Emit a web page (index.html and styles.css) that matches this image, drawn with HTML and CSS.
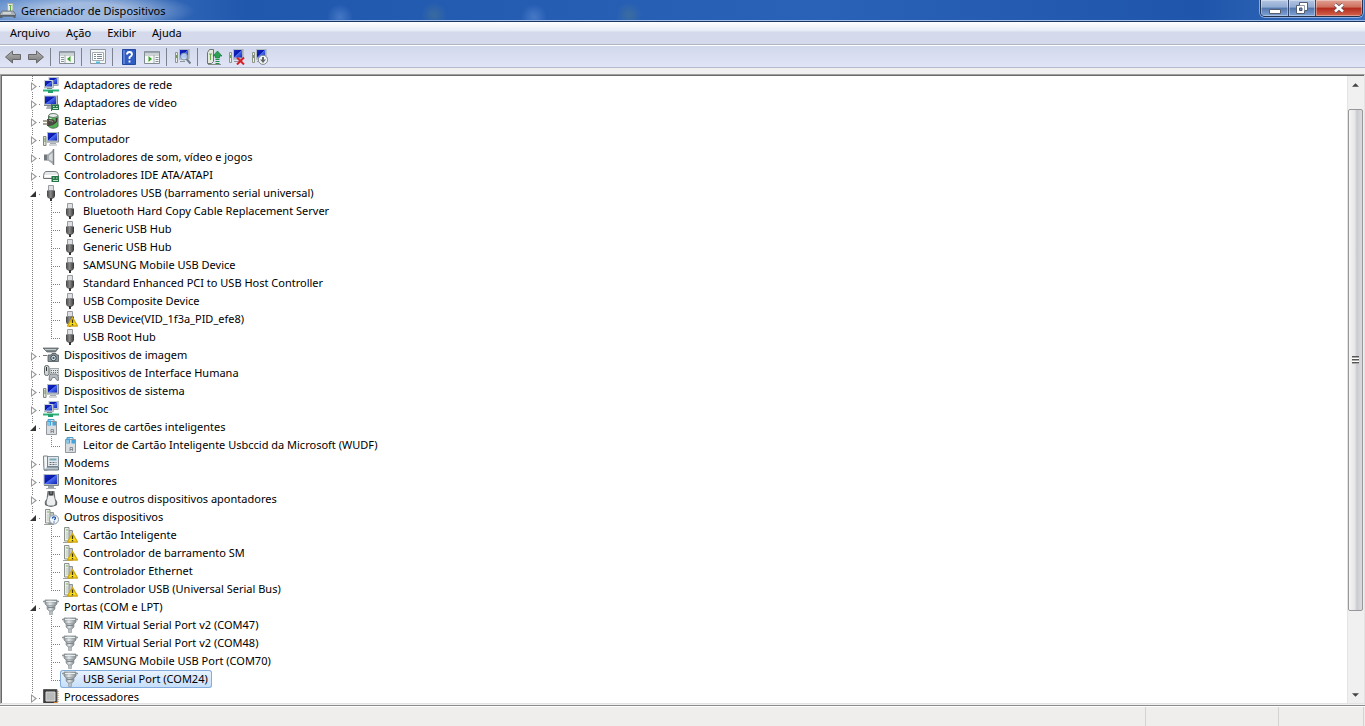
FILE: index.html
```html
<!DOCTYPE html>
<html lang="pt-BR">

<head>
  <meta charset="UTF-8" />
  <meta name="viewport" content="width=device-width, initial-scale=1.0" />
  <title>Gerenciador de Dispositivos</title>
  <link rel="stylesheet" href="styles.css">
</head>

<body>
  <!-- icon sprites -->
  <svg class="sprites" aria-hidden="true">
    <defs>
      <linearGradient id="screen" x1="0" y1="0" x2="1" y2="1">
        <stop offset="0" stop-color="#1a2fd0" /><stop offset=".45" stop-color="#0a18a8" />
        <stop offset=".5" stop-color="#4a6cf0" /><stop offset="1" stop-color="#0c1cb0" />
      </linearGradient>
      <linearGradient id="metal" x1="0" y1="0" x2="1" y2="0">
        <stop offset="0" stop-color="#8a9297" /><stop offset=".4" stop-color="#e4e8ea" /><stop offset="1" stop-color="#80888c" />
      </linearGradient>
      <linearGradient id="plug" x1="0" y1="0" x2="1" y2="0">
        <stop offset="0" stop-color="#454545" /><stop offset=".45" stop-color="#8a8a8a" /><stop offset="1" stop-color="#333" />
      </linearGradient>
      <linearGradient id="arrow" x1="0" y1="0" x2="0" y2="1">
        <stop offset="0" stop-color="#b4b4b4" /><stop offset="1" stop-color="#777" />
      </linearGradient>
    </defs>
    <symbol id="net" viewBox="0 0 16 16">
      <rect x="6" y=".5" width="8.500" height="7" fill="url(#screen)" stroke="#b9c3cc" />
      <path d="M15.200 0v8.500H10" fill="none" stroke="#8c959c" stroke-width=".8" />
      <rect x="1.500" y="3.500" width="8" height="6.500" fill="url(#screen)" stroke="#ccd4da" />
      <path d="M10.300 3v7.800H1" fill="none" stroke="#8a96a3" stroke-width=".8" />
      <path d="M4 11.500h5" stroke="#7b858c" />
      <path d="M0 13.500h16" stroke="#2fae7c" stroke-width="2" /><path d="M5 12h5v4H5z" fill="#25a06c" /><path d="M0 12.500h15" stroke="#8fe0bd" />
    </symbol>
    <symbol id="monitor" viewBox="0 0 16 16">
      <rect x="1" y="1.500" width="13.500" height="10" fill="url(#screen)" stroke="#b5bcc3" />
      <path d="M15.500 1v11.500H1" fill="none" stroke="#7c858d" /><path d="M5 13h6v2H5z" fill="#9ba4ab" /><path d="M3 15.500h10" stroke="#a9b0b5" />
    </symbol>
    <symbol id="video" viewBox="0 0 16 16">
      <rect x="1.500" y="1" width="12" height="8.500" fill="url(#screen)" stroke="#b5bcc3" />
      <path d="M14.500.5v10H1" fill="none" stroke="#7c858d" /><path d="M4 11h4l1 3H3z" fill="#a9b1b7" />
      <path d="M8.500 9.500H16V15H8.500z" fill="#267548" /><path d="M10 11.500h1.500M13 11.500h1.500M10 13.500h5" stroke="#c5e8cf" /><path d="M8.500 9v7" stroke="#666" />
    </symbol>
    <symbol id="battery" viewBox="0 0 16 16">
      <path d="M5.500 2.500q4-3 9.500 0v11q-5 3.500-9.500 0z" fill="#4db352" stroke="#50705a" />
      <ellipse cx="10.200" cy="2.500" rx="4.500" ry="2" fill="#e5ece7" stroke="#667a6d" /><path d="M7.500 5v8" stroke="#c7f5c1" stroke-width="2" />
      <path d="M4 6h3q5 0 5 3.200T7 13H4z" fill="#4e4a43" /><path d="M0 8h4.500M0 11h4.500" stroke="#8d8571" stroke-width="1.500" /><path d="M6 7.500q3 0 4 1.500" stroke="#9b968a" fill="none" /><path d="M11 10q3 0 2.500-5" fill="none" stroke="#3c3833" stroke-width="1.500" />
    </symbol>
    <symbol id="computer" viewBox="0 0 16 16">
      <path d="M.5 5.500h2.500v9H.5z" fill="#e0e5dc" stroke="#81897c" /><path d="M1 8h2M1 10h2" stroke="#719a58" />
      <rect x="4.500" y="1.500" width="10" height="8.500" fill="url(#screen)" stroke="#b4bcc3" />
      <path d="M15.500 1v10H4" fill="none" stroke="#7d868f" /><path d="M7 12.500h6M6 14h8" stroke="#a4acb2" />
    </symbol>
    <symbol id="sound" viewBox="0 0 16 16">
      <path d="M1 5.500h4v6H1z" fill="#70787d" /><path d="M4 6l6.500-5.500v15L4 11z" fill="#a5acb0" /><path d="M6 6.500l4-3v9l-4-2z" fill="#d5d9dc" /><path d="M10.500 0v16" stroke="#7a8287" stroke-width="1.500" />
    </symbol>
    <symbol id="ide" viewBox="0 0 16 16">
      <path d="M3 4.500h9q3 0 3.500 3v4h-15v-3q.5-4 2.500-4z" fill="#e5e7e9" stroke="#777e84" /><path d="M2 9h12" stroke="#fff" stroke-width="2" /><path d="M1 11.500h14" stroke="#6b7174" />
      <path d="M8.500 9H16v6H8.500z" fill="#267548" /><path d="M10 11h1.500M13 11h1.500M10 13.500h5" stroke="#c5e8cf" />
    </symbol>
    <symbol id="usb" viewBox="0 0 16 16">
      <path d="M5.500.5h5v5h-5z" fill="#dfe0e2" stroke="#999ca2" /><path d="M4 5.500h8v5.500q0 2-3 3H7q-3-1-3-3z" fill="url(#plug)" /><path d="M7 13h2v3H7z" fill="#333" />
    </symbol>
    <symbol id="imaging" viewBox="0 0 16 16">
      <path d="M0 1h15.500l-3 4H4z" fill="#7d8688" stroke="#535a5e" stroke-width=".7" /><path d="M2 2.500h11" stroke="#c2cbcc" />
      <path d="M5 8h3l1-1.500h4L14 8h1.500v6.500H5z" fill="#8b959a" stroke="#4d565a" stroke-width=".8" /><circle cx="10.500" cy="11" r="2.700" fill="#eef3f5" stroke="#364046" /><circle cx="10.500" cy="11" r="1.200" fill="#37627c" /><path d="M0 8.500h4" stroke="#777" />
    </symbol>
    <symbol id="hid" viewBox="0 0 16 16">
      <path d="M7 3.500h9v7H7z" fill="#e2e5e6" stroke="#8b9296" stroke-width=".8" /><path d="M8 5.500h7M8 7.500h7" stroke="#657079" stroke-dasharray="1 1" />
      <rect x="1.500" y=".5" width="4.500" height="10" rx="2" fill="#d2d5d6" stroke="#62686b" /><path d="M3.500 2v4" stroke="#333" />
      <path d="M6 15q0-6 2-6h5q2.500 0 3 6l-2 .5-2-3H9.500L8 15.500z" fill="#b5bbbf" stroke="#697176" stroke-width=".8" />
    </symbol>
    <symbol id="reader" viewBox="0 0 16 16">
      <path d="M5 .5h6v3H5z" fill="#ccecff" stroke="#509bc8" /><path d="M3.500 2.500h10v13h-10z" fill="#d9dde0" stroke="#92989d" />
      <path d="M4.500 1.500h3.500v5H4.500zM9.500 3h3.500v3.500H9.500z" fill="#45a4da" /><path d="M6 3v3" stroke="#c3ebff" /><path d="M8 14v-3.500h2.500V14M8 12.500h2.500" fill="none" stroke="#777e84" stroke-width=".8" />
    </symbol>
    <symbol id="modem" viewBox="0 0 16 16">
      <path d="M1 1.500h14.500v10H1z" fill="#e2e7eb" stroke="#8694a0" /><path d="M.5 1h4v14H1z" fill="#f3f5f6" stroke="#788590" /><path d="M6.500 3.500h7v2h-7z" fill="#79aab9" />
      <path d="M6.500 7.500h7M6.500 9.500h7" stroke="#65717a" stroke-dasharray="2 1" /><path d="M4 12h11.500v3H1" fill="#bdc6cc" stroke="#667681" />
    </symbol>
    <symbol id="mouse" viewBox="0 0 16 16">
      <path d="M5 0q3 2 6 0l1 8q3 3 1.500 6-5.500 3-11 0Q1 11 4 8z" fill="#7d8184" stroke="#4d5154" stroke-width=".7" /><path d="M6 3q-4 10-1 11.500h6Q14 13 10 3q-2 3-4 0" fill="#eceeef" /><path d="M6 .5h4v4H6z" fill="#3c4144" /><path d="M7.500 2h1" stroke="#fff" />
    </symbol>
    <symbol id="unit" viewBox="0 0 16 16">
      <path d="M5.500 3.500h5v11h-5z" fill="#c3c7c6" stroke="#8d9392" /><path d="M2.500.5h4.500v13.500H2.500z" fill="#e9ece8" stroke="#8b928d" /><path d="M4 3h2" stroke="#7caf5c" /><path d="M5 5v7" stroke="#b9c8b2" /><path d="M1 15.500h10" stroke="#9ba09c" />
    </symbol>
    <symbol id="question" viewBox="0 0 16 16">
      <circle cx="11" cy="10.500" r="4.500" fill="#f3f7fb" stroke="#8a9aab" /><path d="M9.500 9.500q0-1.700 1.500-1.700t1.500 1.300q0 .9-1.400 1.900M11 12.500v1" fill="none" stroke="#1751a5" stroke-width="1.300" />
    </symbol>
    <symbol id="warning" viewBox="0 0 16 16">
      <path d="M10.500 6.500l5 8.500h-10z" fill="#f7dc22" stroke="#d2ab10" stroke-width="1.400" stroke-linejoin="round" /><path d="M10.500 8.500v3.500M10.500 13v1.300" stroke="#3a3200" stroke-width="1.300" />
    </symbol>
    <symbol id="port" viewBox="0 0 16 16">
      <path d="M2 1h12v4l-2 2H4L2 5z" fill="url(#metal)" stroke="#858d91" stroke-width=".8" /><path d="M0 2.500h16" stroke="#8f979b" stroke-width="1.500" /><path d="M3 2.500h10" stroke="#e9eeee" /><path d="M4 7h8v3l-2 2H6l-2-2z" fill="url(#metal)" stroke="#858d91" stroke-width=".6" /><path d="M5 8.500h6" stroke="#7c868b" /><path d="M6.500 12h3v3.500h-3z" fill="#b9c1c4" stroke="#8f979a" stroke-width=".6" />
    </symbol>
    <symbol id="cpu" viewBox="0 0 16 16">
      <path d="M.5.500h13.500v14H.5z" fill="#3d3d3d" stroke="#5c5c5c" /><path d="M3 3h9v9H3z" fill="#b9baba" stroke="#dadada" /><path d="M15 2v12M2 15.200h12" stroke="#a98440" stroke-dasharray="1 1" /><path d="M11 13.500h3" stroke="#ce7f2d" />
    </symbol>
    <symbol id="scanpc" viewBox="0 0 16 16">
      <path d="M.5 3.500h2v10h-2z" fill="#eef1ea" stroke="#8d9589" /><path d="M1.500 6v3" stroke="#6d9a52" />
      <rect x="4.500" y=".5" width="9" height="8.500" fill="url(#screen)" stroke="#b1bac1" /><path d="M14 0v10H4" fill="none" stroke="#9aa3aa" /><path d="M5 12.500h5" stroke="#8c9499" />
    </symbol>
  </svg>

  <header class="titlebar">
    <svg class="icon" viewBox="0 0 16 16">
      <path d="M7.500.5h5.500v9H7.500z" fill="#e4ebe2" stroke="#a5afa0" /><path d="M9 2.500h2.500M10.500 3v5" stroke="#68aa48" /><path d="M2 8h11l2.500 3v2H0v-2z" fill="#aab2b7" stroke="#626a70" stroke-width=".8" /><path d="M0 12h15.500v3h-2v-1.500h-11V15H0z" fill="#596167" /><path d="M3 10h8" stroke="#f1f3f4" />
    </svg>
    <h1 class="title">Gerenciador de Dispositivos</h1>
    <div class="window-buttons">
      <button type="button" class="wbtn minimize" aria-label="Minimizar">
        <svg viewBox="0 0 12 12"><path d="M.5 7.500h11v4H.5z" fill="#fff" stroke="#565f70" /></svg>
      </button>
      <button type="button" class="wbtn restore" aria-label="Restaurar">
        <svg viewBox="0 0 12 12"><path d="M3.500.5h8v8h-3v3h-8v-8h3z" fill="#fff" stroke="#565f70" /><path d="M3.500 3.500h5v5" fill="none" stroke="#7d879a" stroke-width=".8" /><path d="M3.500 6h2.500v2.500H3.500z" fill="#7b91b8" stroke="#46506a" /></svg>
      </button>
      <button type="button" class="wbtn close" aria-label="Fechar">
        <svg viewBox="0 0 12 12"><path d="M2 2.500l8 7M10 2.500l-8 7" stroke="#5b4a50" stroke-width="4" /><path d="M2 2.500l8 7M10 2.500l-8 7" stroke="#fff" stroke-width="2.600" /></svg>
      </button>
    </div>
  </header>

  <nav class="menubar">
    <button type="button">Arquivo</button>
    <button type="button">Ação</button>
    <button type="button">Exibir</button>
    <button type="button">Ajuda</button>
  </nav>

  <div class="toolbar">
    <button type="button" aria-label="Voltar"><svg class="icon" viewBox="0 0 16 16"><path d="M.5 8l7-6v3.500h8v5h-8V14z" fill="url(#arrow)" stroke="#686868" /></svg></button>
    <button type="button" aria-label="Avançar"><svg class="icon" viewBox="0 0 16 16"><path d="M15.500 8l-7-6v3.500h-8v5h8V14z" fill="url(#arrow)" stroke="#686868" /></svg></button>
    <span class="sep"></span>
    <button type="button" aria-label="Mostrar árvore">
      <svg class="icon" viewBox="0 0 16 16"><path d="M.5 2.500h15v12H.5z" fill="#f7f9f7" stroke="#808a92" /><path d="M1 3.500h14" stroke="#9aa4ad" stroke-width="2" /><path d="M1 6h14M6 6v8" stroke="#a4adb3" /><path d="M2 8.500h3M2 10.500h3M2 12.500h3" stroke="#8793a0" /><path d="M11.500 7v6L8 10z" fill="#36a526" /></svg>
    </button>
    <span class="sep"></span>
    <button type="button" aria-label="Propriedades">
      <svg class="icon" viewBox="0 0 16 16"><path d="M.5.500h15v14H.5z" fill="#f4f6f7" stroke="#8f999f" /><path d="M2.500 3.500h11v8h-11z" fill="#fff" stroke="#a4adb3" /><path d="M4 5.500h2M7 5.500h5M4 7.500h2M7 7.500h5M4 9.500h2M7 9.500h5" stroke="#798894" /><path d="M6 13.500h4" stroke="#55bde4" stroke-width="2" /></svg>
    </button>
    <span class="sep"></span>
    <button type="button" aria-label="Ajuda">
      <svg class="icon" viewBox="0 0 16 16"><path d="M1.500.5h13v15h-13z" fill="#315dc2" stroke="#2148a0" /><path d="M3 1v14" stroke="#84a5e8" /><path d="M6 5.500Q6 3 8.500 3T11 5.500q0 1.200-2.500 2.800V10M8.500 11.500v2" fill="none" stroke="#fff" stroke-width="1.800" /></svg>
    </button>
    <button type="button" aria-label="Painel de ações">
      <svg class="icon" viewBox="0 0 16 16"><path d="M.5 2.500h15v12H.5z" fill="#f7f9f7" stroke="#808a92" /><path d="M1 3.500h14" stroke="#9aa4ad" stroke-width="2" /><path d="M1 6h14M10 6v8" stroke="#a4adb3" /><path d="M11.500 8.500h3M11.500 10.500h3M11.500 12.500h3" stroke="#8793a0" /><path d="M4.500 7v6L8 10z" fill="#36a526" /></svg>
    </button>
    <span class="sep"></span>
    <button type="button" aria-label="Verificar se há alterações de hardware">
      <svg class="icon" viewBox="0 0 16 16"><use href="#scanpc" /><circle cx="9" cy="7.500" r="3.500" fill="#cfe3f4" fill-opacity=".8" stroke="#8199ad" /><path d="M11.500 10l4 4.500" stroke="#717e8b" stroke-width="2" /></svg>
    </button>
    <span class="sep"></span>
    <button type="button" aria-label="Atualizar driver">
      <svg class="icon" viewBox="0 0 16 16"><path d="M1.500 3.500l2-3h4v12l-2 2h-4z" fill="#e4eadf" stroke="#6b756c" /><path d="M3 5h3M4.500 5v6" stroke="#6da853" /><path d="M2 15.500h13" stroke="#858d86" /><path d="M11.500 2l4.500 5h-2.500v2h-4V7H7z" fill="#2aa153" stroke="#17793a" stroke-width=".7" /><path d="M9.500 10.500h4M9.500 12.500h4M9.500 14.500h4" stroke="#238b48" /></svg>
    </button>
    <button type="button" aria-label="Desinstalar">
      <svg class="icon" viewBox="0 0 16 16"><use href="#scanpc" /><path d="M8 8.500l7 7M15 8.500l-7 7" stroke="#d91f25" stroke-width="2" /></svg>
    </button>
    <button type="button" aria-label="Desabilitar">
      <svg class="icon" viewBox="0 0 16 16"><use href="#scanpc" /><circle cx="11" cy="10.800" r="4.600" fill="#f3f4f5" stroke="#80888e" /><path d="M11 8v3" stroke="#62696e" stroke-width="2" /><path d="M8 10.500h6l-3 3.500z" fill="#62696e" /></svg>
    </button>
  </div>

  <main class="pane">
    <ul class="tree">
      <li><div class="row"><span class="toggle"></span><span class="item"><svg class="icon"><use href="#net" /></svg>Adaptadores de rede</span></div></li>
      <li><div class="row"><span class="toggle"></span><span class="item"><svg class="icon"><use href="#video" /></svg>Adaptadores de vídeo</span></div></li>
      <li><div class="row"><span class="toggle"></span><span class="item"><svg class="icon"><use href="#battery" /></svg>Baterias</span></div></li>
      <li><div class="row"><span class="toggle"></span><span class="item"><svg class="icon"><use href="#computer" /></svg>Computador</span></div></li>
      <li><div class="row"><span class="toggle"></span><span class="item"><svg class="icon"><use href="#sound" /></svg>Controladores de som, vídeo e jogos</span></div></li>
      <li><div class="row"><span class="toggle"></span><span class="item"><svg class="icon"><use href="#ide" /></svg>Controladores IDE ATA/ATAPI</span></div></li>
      <li>
        <div class="row"><span class="toggle open"></span><span class="item"><svg class="icon"><use href="#usb" /></svg>Controladores USB (barramento serial universal)</span></div>
        <ul class="branch">
          <li class="row"><span class="item"><svg class="icon"><use href="#usb" /></svg>Bluetooth Hard Copy Cable Replacement Server</span></li>
          <li class="row"><span class="item"><svg class="icon"><use href="#usb" /></svg>Generic USB Hub</span></li>
          <li class="row"><span class="item"><svg class="icon"><use href="#usb" /></svg>Generic USB Hub</span></li>
          <li class="row"><span class="item"><svg class="icon"><use href="#usb" /></svg>SAMSUNG Mobile USB Device</span></li>
          <li class="row"><span class="item"><svg class="icon"><use href="#usb" /></svg>Standard Enhanced PCI to USB Host Controller</span></li>
          <li class="row"><span class="item"><svg class="icon"><use href="#usb" /></svg>USB Composite Device</span></li>
          <li class="row"><span class="item"><svg class="icon"><use href="#usb" /><use href="#warning" /></svg>USB Device(VID_1f3a_PID_efe8)</span></li>
          <li class="row"><span class="item"><svg class="icon"><use href="#usb" /></svg>USB Root Hub</span></li>
        </ul>
      </li>
      <li><div class="row"><span class="toggle"></span><span class="item"><svg class="icon"><use href="#imaging" /></svg>Dispositivos de imagem</span></div></li>
      <li><div class="row"><span class="toggle"></span><span class="item"><svg class="icon"><use href="#hid" /></svg>Dispositivos de Interface Humana</span></div></li>
      <li><div class="row"><span class="toggle"></span><span class="item"><svg class="icon"><use href="#computer" /></svg>Dispositivos de sistema</span></div></li>
      <li><div class="row"><span class="toggle"></span><span class="item"><svg class="icon"><use href="#net" /></svg>Intel Soc</span></div></li>
      <li>
        <div class="row"><span class="toggle open"></span><span class="item"><svg class="icon"><use href="#reader" /></svg>Leitores de cartões inteligentes</span></div>
        <ul class="branch">
          <li class="row"><span class="item"><svg class="icon"><use href="#reader" /></svg>Leitor de Cartão Inteligente Usbccid da Microsoft (WUDF)</span></li>
        </ul>
      </li>
      <li><div class="row"><span class="toggle"></span><span class="item"><svg class="icon"><use href="#modem" /></svg>Modems</span></div></li>
      <li><div class="row"><span class="toggle"></span><span class="item"><svg class="icon"><use href="#monitor" /></svg>Monitores</span></div></li>
      <li><div class="row"><span class="toggle"></span><span class="item"><svg class="icon"><use href="#mouse" /></svg>Mouse e outros dispositivos apontadores</span></div></li>
      <li>
        <div class="row"><span class="toggle open"></span><span class="item"><svg class="icon"><use href="#unit" /><use href="#question" /></svg>Outros dispositivos</span></div>
        <ul class="branch">
          <li class="row"><span class="item"><svg class="icon"><use href="#unit" /><use href="#warning" /></svg>Cartão Inteligente</span></li>
          <li class="row"><span class="item"><svg class="icon"><use href="#unit" /><use href="#warning" /></svg>Controlador de barramento SM</span></li>
          <li class="row"><span class="item"><svg class="icon"><use href="#unit" /><use href="#warning" /></svg>Controlador Ethernet</span></li>
          <li class="row"><span class="item"><svg class="icon"><use href="#unit" /><use href="#warning" /></svg>Controlador USB (Universal Serial Bus)</span></li>
        </ul>
      </li>
      <li>
        <div class="row"><span class="toggle open"></span><span class="item"><svg class="icon"><use href="#port" /></svg>Portas (COM e LPT)</span></div>
        <ul class="branch">
          <li class="row"><span class="item"><svg class="icon"><use href="#port" /></svg>RIM Virtual Serial Port v2 (COM47)</span></li>
          <li class="row"><span class="item"><svg class="icon"><use href="#port" /></svg>RIM Virtual Serial Port v2 (COM48)</span></li>
          <li class="row"><span class="item"><svg class="icon"><use href="#port" /></svg>SAMSUNG Mobile USB Port (COM70)</span></li>
          <li class="row"><span class="item selected"><svg class="icon"><use href="#port" /></svg>USB Serial Port (COM24)</span></li>
        </ul>
      </li>
      <li><div class="row"><span class="toggle"></span><span class="item"><svg class="icon"><use href="#cpu" /></svg>Processadores</span></div></li>
    </ul>
    <div class="scrollbar">
      <button type="button" aria-label="Rolar para cima"><svg viewBox="0 0 8 4"><path d="M0 4l4-4 4 4z" fill="#444" /></svg></button>
      <div class="track"><div class="thumb"><span class="grip"></span></div></div>
      <button type="button" aria-label="Rolar para baixo"><svg viewBox="0 0 8 4"><path d="M0 0h8L4 4z" fill="#444" /></svg></button>
    </div>
  </main>

  <footer class="statusbar">
    <span class="cell main"></span>
    <span class="cell wide"></span>
    <span class="cell"></span>
  </footer>
</body>
</html>
```
FILE: styles.css
```css
* {
  box-sizing: border-box;
}
body {
  margin: 0;
  height: 100vh;
  display: flex;
  flex-direction: column;
  overflow: hidden;
  background: #f0f0f0;
  color: #000;
  font-family: "Noto Sans", "Open Sans", sans-serif;
  font-size: 11px;
  line-height: 18px;
}
button {
  padding: 0;
  border: none;
  background: none;
  color: inherit;
  font: inherit;
}
ul {
  margin: 0;
  padding: 0;
  list-style: none;
}
.sprites {
  position: absolute;
  width: 0;
  height: 0;
}
.icon {
  display: block;
  flex: none;
  width: 16px;
  height: 16px;
}

/* Title bar */
.titlebar {
  display: flex;
  align-items: center;
  flex: none;
  height: 22px;
  padding: 0 2px 0 0;
  border-bottom: 1px solid #1c3460;
  box-shadow: inset 0 -1px #9dbbe8;
  background:
    radial-gradient(ellipse 110px 20px at 85px 11px, rgba(255, 255, 255, .5) 40%, transparent),
    radial-gradient(circle at 340px 17px, rgba(120, 160, 225, .4), transparent 13px),
    radial-gradient(circle at 434px 15px, rgba(90, 130, 130, .4), transparent 13px),
    radial-gradient(circle at 534px 17px, rgba(120, 160, 225, .4), transparent 13px),
    radial-gradient(circle at 629px 15px, rgba(90, 130, 130, .4), transparent 13px),
    linear-gradient(90deg, #5685c8, #2058ae 18%, #2a62b8 60%, #1f56ab 88%, #3a6fc0);
}
.title {
  flex: 1;
  margin: 0 0 0 5px;
  font-size: 11px;
  font-weight: normal;
}
.window-buttons {
  display: flex;
  align-self: flex-start;
  height: 17px;
  border: 1px solid #26334f;
  border-top: none;
  border-radius: 0 0 5px 5px;
  overflow: hidden;
  box-shadow: 0 0 0 1px rgba(200, 220, 250, .6);
}
.wbtn {
  display: flex;
  align-items: center;
  justify-content: center;
  width: 27px;
  background: linear-gradient(#b3c5e2, #91abd3 45%, #5377ad 50%, #7fa3d6);
  box-shadow: inset 0 0 0 1px rgba(255, 255, 255, .35);
}
.wbtn + .wbtn {
  border-left: 1px solid #33456a;
}
.wbtn svg {
  width: 12px;
  height: 12px;
}
.wbtn.close {
  width: 47px;
  background: linear-gradient(#e0a193, #cf6f5e 45%, #b22a1b 50%, #d4644e);
}

/* Menu */
.menubar {
  display: flex;
  flex: none;
  height: 23px;
  padding: 0 2px;
  border-bottom: 1px solid #b0b4bf;
  background: linear-gradient(#fff, #e6eaf5 9px, #d4daec 10px, #d4daec);
}
.menubar button {
  padding: 0 8px;
}

/* Toolbar */
.toolbar {
  display: flex;
  align-items: center;
  flex: none;
  height: 23px;
  padding: 0 1px;
  margin-bottom: 6px;
  border-top: 1px solid #fff;
  border-bottom: 1px solid #b5bace;
  background: linear-gradient(#d2d8eb, #dfe5f6);
}
.toolbar button {
  display: flex;
  justify-content: center;
  width: 23px;
}
.sep {
  width: 8px;
  height: 18px;
  background: linear-gradient(#7d8290, #7d8290) 3px 0 / 1px 100% no-repeat;
}

/* Device tree */
.pane {
  display: flex;
  flex: 1;
  min-height: 0;
  padding: 1px 0 0 1px;
  border: 1px solid #a0a0a0;
  border-right-color: #e3e3e3;
  border-bottom-color: #e3e3e3;
  background: #fff;
  box-shadow: inset 1px 1px #696969;
}
.tree {
  flex: 1;
  overflow: hidden;
  padding-left: 27px;
  background: repeating-linear-gradient(#808080 0 1px, #fff 1px 2px) 30px 0 / 1px 100% no-repeat;
}
.row {
  display: flex;
  height: 18px;
  white-space: nowrap;
}
/* expander arrow, with the dots that lead to the icon */
.toggle {
  width: 12px;
  background:
    repeating-linear-gradient(90deg, #808080 0 1px, #fff 1px 2px) 10px 10px / 2px 1px no-repeat,
    linear-gradient(#fff, #fff) 0 5px / 100% 11px no-repeat;
}
.toggle::before {
  content: "";
  display: block;
  width: 6px;
  height: 9px;
  margin: 6px 0 0 2px;
  background: #999;
  clip-path: polygon(0 0, 100% 50%, 0 100%, 0 0, 1px 2px, 1px 7px, 4px 50%, 1px 2px);
}
.toggle.open::before {
  height: 6px;
  margin: 7px 0 0 1px;
  background: #333;
  clip-path: polygon(100% 0, 100% 100%, 0 100%);
}
.item {
  display: flex;
  align-items: center;
  gap: 5px;
  padding: 0 4px 0 2px;
}
.branch {
  padding-left: 19px;
}
.branch .row::before {
  content: "";
  width: 12px;
  background:
    repeating-linear-gradient(#808080 0 1px, #fff 1px 2px) 3px 0 / 1px 100% no-repeat,
    repeating-linear-gradient(90deg, #808080 0 1px, #fff 1px 2px) 3px 10px / 9px 1px no-repeat;
}
.branch .row:last-child::before {
  background-size: 1px 10px, 9px 1px;
}
.selected {
  border-radius: 3px;
  background: linear-gradient(#eaf4fe, #c5defb);
  box-shadow: inset 0 0 0 1px #84acdd;
}

/* Scroll bar */
.scrollbar {
  display: flex;
  flex-direction: column;
  width: 17px;
  padding-right: 1px;
  border-left: 1px solid #e4e4e4;
  background: #f0f0f0;
}
.scrollbar button {
  display: flex;
  align-items: center;
  justify-content: center;
  height: 17px;
}
.scrollbar svg {
  width: 7px;
  height: 4px;
}
.track {
  flex: 1;
  padding-top: 16px;
}
.thumb {
  display: flex;
  align-items: center;
  justify-content: center;
  height: 87%;
  border: 1px solid #979797;
  border-radius: 2px;
  background: linear-gradient(90deg, #f5f5f5, #e6e6e8 45%, #c9cacf 60%, #dcdce0);
}
.grip {
  width: 7px;
  height: 8px;
  background: repeating-linear-gradient(#555 0 1px, #aaa 1px 2px, #fff 2px 3px);
}

/* Status bar */
.statusbar {
  display: flex;
  flex: none;
  height: 21px;
  margin-top: 1px;
  padding: 1px 1px 0 0;
  border-top: 1px solid #8c8c8c;
  background: #f0eded;
  box-shadow: inset 0 1px #fff;
}
.cell {
  width: 85px;
  border-right: 1px solid #d5d2d2;
}
.cell.wide {
  width: 133px;
}
.cell.main {
  flex: 1;
}
```
